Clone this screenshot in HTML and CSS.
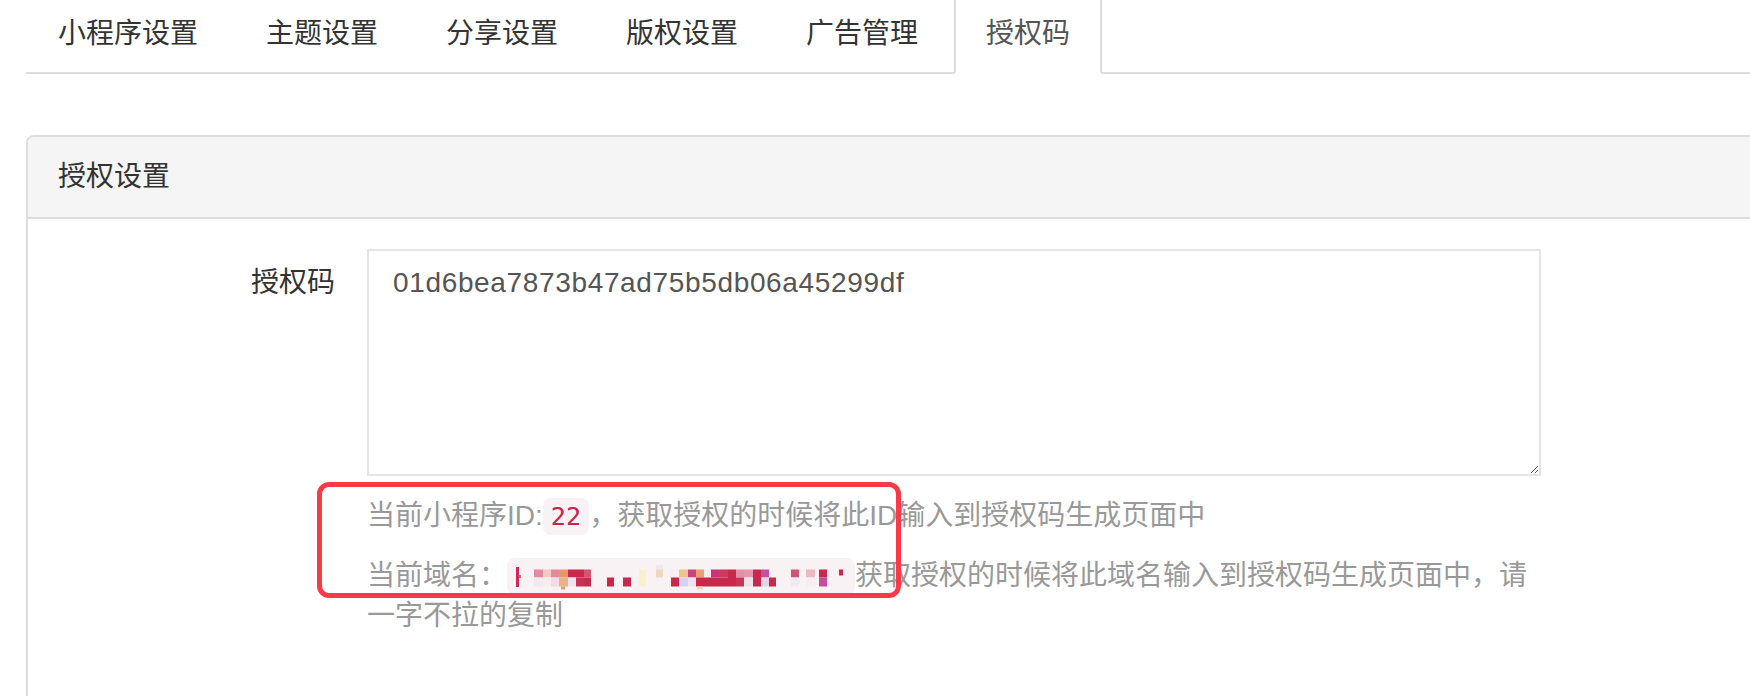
FILE: index.html
```html
<!DOCTYPE html>
<html lang="zh-CN">
<head>
<meta charset="utf-8">
<title>授权码</title>
<link rel="stylesheet" href="styles.css">
</head>
<body>
<div class="page">
  <ul class="tabs">
    <li class="tab"><a>小程序设置</a></li>
    <li class="tab"><a>主题设置</a></li>
    <li class="tab"><a>分享设置</a></li>
    <li class="tab"><a>版权设置</a></li>
    <li class="tab"><a>广告管理</a></li>
    <li class="tab active"><a>授权码</a></li>
  </ul>
  <div class="panel">
    <div class="panel-heading">授权设置</div>
    <div class="panel-body">
      <div class="form-row">
        <label class="form-label" for="code">授权码</label>
        <div class="form-field">
          <textarea id="code" class="form-control">01d6bea7873b47ad75b5db06a45299df</textarea>
          <div class="help">
            <p>当前小程序<span class="latin">ID:</span><code>22</code>，获取授权的时候将此<span class="latin">ID</span>输入到授权码生成页面中</p>
            <p>当前域名：<code class="masked"><svg width="332" height="26" viewBox="0 0 332 26" aria-hidden="true">
              <rect x="1" y="2" width="3" height="20" fill="#d02850"/>
              <rect x="4" y="10" width="2" height="3" fill="#e06080"/>
              <rect x="19" y="4.5" width="9" height="8" fill="#e28aa0"/>
              <rect x="19" y="12.5" width="9" height="9" fill="#f4e8ee"/>
              <rect x="28" y="4.5" width="8" height="8" fill="#f1c9c2"/>
              <rect x="28" y="12.5" width="8" height="9" fill="#f7ecee"/>
              <rect x="36" y="4.5" width="8" height="8" fill="#e2899a"/>
              <rect x="36" y="12.5" width="8" height="9" fill="#eedcea"/>
              <rect x="44" y="4.5" width="9" height="8" fill="#e39a66"/>
              <rect x="44" y="12.5" width="9" height="9" fill="#eab487"/>
              <rect x="46" y="21.5" width="4" height="3" fill="#e0a070"/>
              <rect x="53" y="4.5" width="16" height="8" fill="#c8284c"/>
              <rect x="53" y="12.5" width="8" height="9" fill="#ece4ee"/>
              <rect x="61" y="12.5" width="8" height="9" fill="#c93058"/>
              <rect x="69" y="4.5" width="7" height="8" fill="#d2566f"/>
              <rect x="69" y="12.5" width="7" height="9" fill="#c8284c"/>
              <rect x="92" y="12.5" width="7" height="9" fill="#c8284c"/>
              <rect x="108" y="12.5" width="8" height="9" fill="#c8284c"/>
              <rect x="124" y="4.5" width="7" height="17" fill="#fbf0cc"/>
              <rect x="141" y="0" width="7" height="4.5" fill="#ece8f2"/>
              <rect x="141" y="4.5" width="7" height="8" fill="#f2d6be"/>
              <rect x="156" y="4.5" width="8" height="8" fill="#f6f0f2"/>
              <rect x="156" y="12.5" width="8" height="9" fill="#c8284c"/>
              <rect x="164" y="4.5" width="9" height="8" fill="#efc48e"/>
              <rect x="164" y="12.5" width="9" height="9" fill="#d8d0f0"/>
              <rect x="173" y="4.5" width="8" height="8" fill="#c8447a"/>
              <rect x="173" y="12.5" width="8" height="9" fill="#eee4f0"/>
              <rect x="181" y="4.5" width="8" height="8" fill="#e7a072"/>
              <rect x="181" y="12.5" width="8" height="9" fill="#c8284c"/>
              <rect x="182" y="21.5" width="6" height="3" fill="#f0d8b8"/>
              <rect x="189" y="4.5" width="7" height="8" fill="#f8eef0"/>
              <rect x="189" y="12.5" width="7" height="9" fill="#c8284c"/>
              <rect x="196" y="4.5" width="8" height="8" fill="#c83276"/>
              <rect x="196" y="12.5" width="8" height="9" fill="#c8284c"/>
              <rect x="204" y="4.5" width="9" height="8" fill="#cf3a5a"/>
              <rect x="204" y="12.5" width="9" height="9" fill="#c8284c"/>
              <rect x="213" y="4.5" width="8" height="17" fill="#c8284c"/>
              <rect x="221" y="4.5" width="8" height="8" fill="#e190a8"/>
              <rect x="221" y="12.5" width="8" height="9" fill="#cc3454"/>
              <rect x="229" y="4.5" width="9" height="8" fill="#e396ac"/>
              <rect x="229" y="12.5" width="9" height="9" fill="#f1e2ea"/>
              <rect x="238" y="4.5" width="8" height="17" fill="#c8284c"/>
              <rect x="246" y="4.5" width="8" height="8" fill="#c350a0"/>
              <rect x="246" y="12.5" width="8" height="9" fill="#e2d4e8"/>
              <rect x="254" y="12.5" width="7" height="9" fill="#c8284c"/>
              <rect x="276" y="4.5" width="8" height="8" fill="#d25474"/>
              <rect x="276" y="12.5" width="8" height="9" fill="#f2eaf0"/>
              <rect x="291" y="4.5" width="9" height="8" fill="#eeb8c4"/>
              <rect x="291" y="12.5" width="9" height="9" fill="#f6eef2"/>
              <rect x="304" y="4.5" width="8" height="8" fill="#c8284c"/>
              <rect x="304" y="12.5" width="8" height="9" fill="#c64c9c"/>
              <rect x="324" y="4.5" width="4" height="6" fill="#c8284c"/>
            </svg></code>获取授权的时候将此域名输入到授权码生成页面中，请一字不拉的复制</p>
            <div class="annotation"></div>
          </div>
        </div>
      </div>
    </div>
  </div>
</div>
</body>
</html>
```

FILE: styles.css
```css
* {
  box-sizing: border-box;
}

html,
body {
  margin: 0;
  padding: 0;
  background: #fff;
  overflow: hidden;
}

body {
  font-family: "Noto Sans CJK SC", "Liberation Sans", sans-serif;
  font-size: 28px;
  line-height: 40px;
  color: #333;
  height: 696px;
}

.page {
  padding-left: 26px;
}

.tabs {
  display: flex;
  list-style: none;
  margin: -11px 0 0 0;
  padding: 0;
  border-bottom: 2px solid #ddd;
}

.tab {
  margin-bottom: -2px;
  margin-right: 4px;
}

.tab a {
  display: block;
  padding: 20px 30px 21px;
  border: 2px solid transparent;
  border-radius: 8px 8px 0 0;
  color: #333;
}

.tab.active a {
  color: #555;
  background: #fff;
  border-color: #ddd #ddd transparent;
}

.panel {
  margin-top: 61px;
  margin-right: -40px;
  border: 2px solid #ddd;
  border-radius: 8px;
  background: #fff;
}

.panel-heading {
  padding: 17px 30px 23px;
  background: #f5f5f5;
  border-bottom: 2px solid #ddd;
  border-radius: 6px 6px 0 0;
}

.panel-body {
  padding: 30px 30px 80px;
}

.form-row {
  display: flex;
  gap: 32px;
}

.form-label {
  flex: none;
  width: 277px;
  text-align: right;
  padding-top: 11px;
}

.form-field {
  flex: none;
  width: 1174px;
}

.form-control {
  display: block;
  width: 100%;
  height: 227px;
  margin: 0;
  padding: 12px 24px;
  border: 2px solid #e3e4e7;
  border-radius: 0;
  font-family: "Liberation Sans", sans-serif;
  font-size: 28px;
  line-height: 40px;
  letter-spacing: 0.65px;
  color: #555;
  resize: vertical;
  outline: none;
}

.help {
  position: relative;
  margin-top: 17px;
  color: #999;
}

.help p {
  margin: 0 0 20px;
}

.latin {
  font-family: "Liberation Sans", sans-serif;
  line-height: 28px;
}

code {
  font-family: "DejaVu Sans Mono", monospace;
  font-size: 25.2px;
  line-height: 1;
  padding: 4px 8px;
  color: #c7254e;
  background: #f9f2f4;
  border-radius: 8px;
}

.masked svg {
  display: inline-block;
  vertical-align: -6px;
}

.annotation {
  position: absolute;
  left: -50px;
  top: -11px;
  width: 584px;
  height: 116px;
  border: 5px solid #fb3a48;
  border-radius: 12px;
}
```
